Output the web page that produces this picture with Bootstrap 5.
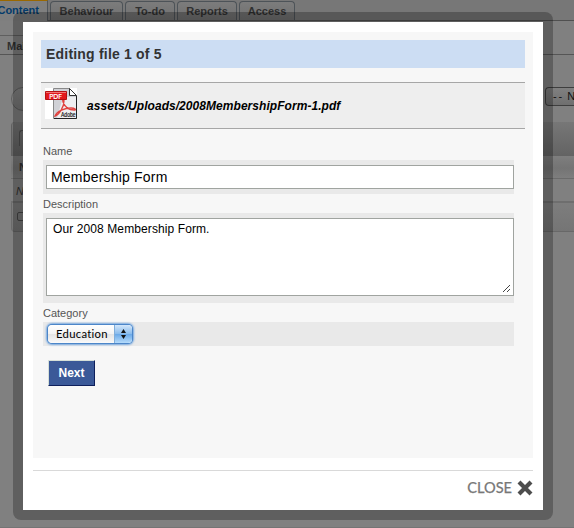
<!DOCTYPE html>
<html lang="en">
<head>
<meta charset="utf-8">
<meta name="viewport" content="width=device-width, initial-scale=1">
<title>Editing file 1 of 5</title>
<link href="https://cdn.jsdelivr.net/npm/bootstrap@5.3.0/dist/css/bootstrap.min.css" rel="stylesheet">
<style>
html,body{height:528px;overflow:hidden}
body{font:11px/14px "Liberation Sans",Arial,sans-serif;background:#808080;color:#333}
.backdrop-page{height:528px;background:#808080;border-bottom:1px solid #747474}
.topbar{height:21px;background:#777;border-bottom:1px solid #505050;padding-top:1px;gap:2px}
.tab{height:19px;border:1px solid #4d5358;border-bottom:0;border-radius:4px 4px 0 0;background:linear-gradient(#7c7c7c,#707070);font-weight:bold;line-height:19px;text-align:center;color:#303030}
.tab-on{width:48px;margin-top:-1px;height:21px;border:0;border-top:1px solid #9a6800;border-right:1px solid #50565c;border-radius:0;background:#7f7f7f;color:#043b6b;line-height:19px;padding-right:8px;white-space:nowrap;overflow:hidden}
.tab-b{width:73px}.tab-t{width:50px}.tab-r{width:60px}.tab-a{width:56px}
.subbar{height:34px;padding-top:14px;border-bottom:1px solid #555}
.subtab{width:62px;height:19px;border-top:1px solid #5f5f5f;font-weight:bold;line-height:20px;padding-left:7px;color:#303030}
.tools{height:67px;padding:32px 0 0 11px}
.pill{width:60px;height:24px;border:1px solid #5f5f5f;border-radius:12px;background:linear-gradient(#868686,#767676)}
.pick{width:29px;height:19px;border:1px solid #3e3e3e;border-right:0;border-radius:4px 0 0 4px;background:linear-gradient(#808080,#6f6f6f);color:#111;line-height:17px;padding-left:7px;letter-spacing:1.8px;overflow:hidden;white-space:nowrap;word-spacing:-1.5px}
.grid-bg{margin-left:11px}
.g1{height:34px;background:linear-gradient(#777,#636363);border-radius:4px 0 0;border-left:1px solid #606060;padding:8px 0 0 7px}
.g1 span{display:block;width:12px;height:16px;border:1px solid #505050;border-radius:3px 0 0;border-right:0;border-bottom:0}
.g2{height:23px;background:linear-gradient(#7e7e7e,#747474 55%,#7e7e7e);border-bottom:1px solid #6b6b6b;padding:4px 0 0 8px;font-weight:bold}
.g3{height:24px;border-bottom:2px solid #6e6e6e;padding:5px 0 0 5px;font-style:italic}
.g4{height:29px;background:linear-gradient(#7d7d7d,#757575);border-bottom:1px solid #686868;border-left:1px solid #6b6b6b;border-radius:0 0 0 4px;padding:9px 0 0 5px}
.g4 span{display:block;width:10px;height:9px;border:1px solid #484848;border-radius:2px}
.popup{left:13px;top:12px;width:540px;height:508px;padding:10px;border-radius:8px;background:rgba(0,0,0,.26)}
.sheet{height:488px;background:#fff;padding:10px}
.panel{height:426px;flex:none;background:#f7f7f7;padding:8px}
.heading{height:28px;background:#ccddf3;font-size:14px;line-height:29px;font-weight:bold;color:#333;padding-left:5px;margin:0 0 14px;letter-spacing:.2px}
.filebox{height:47px;background:#eee;border-top:1px solid #a6a6a6;border-bottom:1px solid #a6a6a6;padding-left:4px;font:italic bold 12px/14px "Liberation Sans",Arial,sans-serif;color:#000}
.filebox svg{width:32px;height:31px;margin-top:-4px}
.filebox span{margin-left:10px;letter-spacing:.05px}
.fields{padding:12px 11px 0 2px;color:#555}
.lbl{height:19px;line-height:20px;display:block}
.holder{background:#e9e9e9;padding:5px 0 5px 3px}
.fields .inp{display:block;width:100%;height:24px;border:1px solid #a0a4a0;border-radius:0;background:#fff;padding:0 4px;color:#000;font:14px/22px "Liberation Sans",Arial,sans-serif;letter-spacing:.2px}
.fields .area{height:78px;font-size:12px;line-height:14px;padding:3px 6px;resize:none;overflow:hidden;letter-spacing:.1px}
.grip{right:3px;bottom:10px;width:9px;height:9px}
.holder-d{padding-bottom:7px}
.holder-c{height:24px;padding:3px 0 0 5px}
.choice{width:84px;height:18px;border-radius:4px;background:linear-gradient(#fff,#f3f3f3 48%,#e4e4e4 52%,#fafafa);box-shadow:0 0 0 1px #4c86c9,0 0 2px 2px #78a9df;color:#000;font:11.3px/17px Lato,sans-serif;letter-spacing:.28px;padding-left:8px}
.choice i{width:18px;height:18px;border-radius:0 4px 4px 0;background:linear-gradient(#d3e7fb,#8bbcec 48%,#6caae8 52%,#b5dbfb);border-left:1px solid #80aeda}
.choice svg{width:7px;height:12px}
.fields .go{display:block;width:47px;height:26px;margin:14px 0 0 5px;padding:0;border:1px solid;border-color:#d6dfd8 #0e1f5b #0e1f5b #d6dfd8;border-radius:0;background:#3b5998;color:#fff;font:bold 12px/23px "Liberation Sans",Arial,sans-serif}
.foot{flex:none;margin-top:12px;height:34px;border-top:1px solid #d9d9d9;color:#777;font:14.600px/18px Lato,sans-serif;-webkit-text-stroke:.25px #777}
.foot svg{width:16px;height:16px;margin-left:5px}
</style>
<script src="https://cdn.jsdelivr.net/npm/bootstrap@5.3.0/dist/js/bootstrap.bundle.min.js"></script>
</head>
<body>
<div class="backdrop-page">
  <nav class="topbar d-flex">
    <div class="tab tab-on d-flex justify-content-end">Content</div>
    <div class="tab tab-b">Behaviour</div><div class="tab tab-t">To-do</div><div class="tab tab-r">Reports</div><div class="tab tab-a">Access</div>
  </nav>
  <div class="subbar"><div class="subtab">Main</div></div>
  <div class="tools d-flex justify-content-between"><div class="pill"></div><div class="pick">-- N</div></div>
  <div class="grid-bg">
    <div class="g1"><span></span></div><div class="g2">Name</div><div class="g3">No files</div><div class="g4"><span></span></div>
  </div>
</div>

<div class="popup position-absolute">
  <div class="sheet d-flex flex-column">
    <div class="panel">
      <h1 class="heading">Editing file 1 of 5</h1>
      <div class="filebox d-flex align-items-center">
        <svg viewBox="0 0 32 31">
          <path fill="#fff" d="M0 0h32v31H0z"/>
          <path fill="#d0d1d6" stroke="#888" d="M8.500.5h16l7 7v23h-23z"/>
          <path fill="#eeeef0" d="M18 9h13v21H12z"/>
          <path fill="#fff" stroke="#333" d="M24.500.5v7h7z"/>
          <path stroke="#222" d="M31.500 8v22.500H9" fill="none"/>
          <path fill="none" stroke="#e04340" stroke-width="1.300" d="M10 28c4-1 9-9 9-15 0-3-2-2-1 1 2 5 6 8 11 8 3 0 1-2-3-2-6 0-14 3-16 8z"/>
          <path fill="#e3191c" stroke="#b51013" d="M.5 3.500h21v8H.5z"/>
          <path stroke="#f27473" d="M1 4.500h20"/>
          <text x="4" y="10.500" font-family="Open Sans,sans-serif" font-size="7.500" font-style="normal" font-weight="600" fill="#fff" textLength="13">PDF</text>
          <text x="16" y="29" font-family="Liberation Sans,sans-serif" font-size="7.500" font-style="normal" font-weight="400" fill="#111" stroke="#111" stroke-width=".2" textLength="14.500" lengthAdjust="spacingAndGlyphs">Adobe</text>
        </svg>
        <span>assets/Uploads/2008MembershipForm-1.pdf</span>
      </div>
      <form class="fields">
        <label class="lbl" for="name">Name</label>
        <div class="holder"><input id="name" class="form-control inp" value="Membership Form"></div>
        <label class="lbl" for="desc">Description</label>
        <div class="holder holder-d position-relative">
          <textarea id="desc" class="form-control inp area">Our 2008 Membership Form.</textarea>
          <svg class="grip position-absolute" viewBox="0 0 9 9"><path d="M1 8l7-7M5 8l3-3" stroke="#444" fill="none"/></svg>
        </div>
        <span class="lbl">Category</span>
        <div class="holder holder-c"><div class="choice d-flex justify-content-between"><span>Education</span><i class="d-flex align-items-center justify-content-center"><svg viewBox="0 0 7 12"><path d="M3.500 1l2.500 4H1zM3.500 11L1 7h5z" fill="#111"/></svg></i></div></div>
        <button type="button" class="btn go">Next</button>
      </form>
    </div>
    <div class="foot d-flex align-items-center justify-content-end"><span>CLOSE</span><svg viewBox="0 0 16 16"><path d="M2 2l12 12M14 2L2 14" stroke="#4d4d4d" stroke-width="4.200"/></svg></div>
  </div>
</div>
</body>
</html>
